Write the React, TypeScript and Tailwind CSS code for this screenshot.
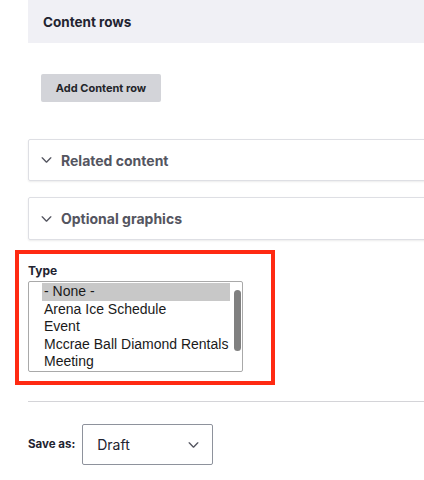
import React from "react";

const Chevron = ({ className }: { className?: string }) => (
  <svg className={className} viewBox="0 0 12 7" fill="none" stroke="currentColor" strokeWidth="1.6" strokeLinecap="round" strokeLinejoin="round">
    <path d="M1 1l5 5 5-5" />
  </svg>
);

const options = ["- None -", "Arena Ice Schedule", "Event", "Mccrae Ball Diamond Rentals", "Meeting"];

export default function App() {
  return (
    <div className="w-[424px] h-[480px] bg-white overflow-hidden font-['Inter',sans-serif] text-[#222330]">
      <div className="ml-[28px] w-[420px] h-[43px] bg-[#f0f0f5] flex items-center pl-[15px] pt-[2px]">
        <span className="text-[13.5px] font-bold">Content rows</span>
      </div>
      <div className="ml-[41px] mt-[31px] w-[120px] h-[28px] rounded-[2px] bg-[#d3d4d9] flex items-center justify-center">
        <span className="text-[11px] font-bold text-[#232429]">Add Content row</span>
      </div>
      <div className="ml-[28px] mt-[37px] w-[420px] h-[42px] border border-[#dedfe4] rounded-[2px] shadow-[0_1px_2px_rgba(0,0,0,0.08)] flex items-center pl-[12px] text-[#545560]">
        <Chevron className="w-[11px] h-[6px] mr-[9px]" />
        <span className="text-[14px] font-bold">Related content</span>
      </div>
      <div className="ml-[28px] mt-[16px] w-[420px] h-[43px] border border-[#dedfe4] rounded-[2px] shadow-[0_1px_2px_rgba(0,0,0,0.08)] flex items-center pl-[12px] text-[#545560]">
        <Chevron className="w-[11px] h-[6px] mr-[9px]" />
        <span className="text-[14px] font-bold">Optional graphics</span>
      </div>
      <div className="ml-[15px] mt-[10px] w-[260px] h-[135px] border-4 border-[#ff2a12] pl-[9px] pt-[9px]">
        <div className="text-[12px] leading-[15px] font-bold mb-[3px]">Type</div>
        <div className="relative w-[215px] h-[91px] border border-[#a9a9a9] rounded-[2px] pt-[1px] pl-[13px] font-['Liberation_Sans',Arial,sans-serif] text-[14px] text-[#1a1a1a]">
          {options.map((o, i) => (
            <div key={o} className={`w-[188px] h-[17.5px] leading-[17.5px] pl-[2px] whitespace-nowrap ${i === 0 ? "bg-[#c8c8c8]" : ""}`}>
              {o}
            </div>
          ))}
          <div className="absolute left-[205px] top-[8px] w-[7px] h-[61px] rounded-full bg-[#808080]" />
        </div>
      </div>
      <div className="ml-[28px] mt-[16px] w-[400px] h-px bg-[#d4d4d8]" />
      <div className="ml-[28px] mt-[22px] flex items-center">
        <span className="text-[11.5px] font-bold mr-[7px]">Save as:</span>
        <div className="w-[131px] h-[41px] border border-[#8e929c] rounded-[2px] flex items-center pl-[14px] pr-[13px] justify-between">
          <span className="text-[14px]">Draft</span>
          <Chevron className="w-[11px] h-[6px] text-[#545560]" />
        </div>
      </div>
    </div>
  );
}
